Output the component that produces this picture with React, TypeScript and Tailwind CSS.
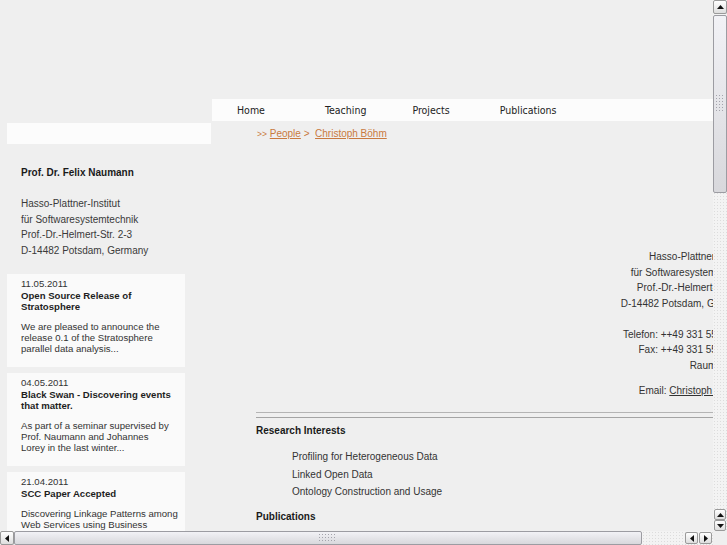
import React from 'react';

type NewsItem = {
  date: string;
  title: string[];
  body: string[];
};

const news: NewsItem[] = [
  {
    date: '11.05.2011',
    title: ['Open Source Release of', 'Stratosphere'],
    body: ['We are pleased to announce the', 'release 0.1 of the Stratosphere', 'parallel data analysis...'],
  },
  {
    date: '04.05.2011',
    title: ['Black Swan - Discovering events', 'that matter.'],
    body: ['As part of a seminar supervised by', 'Prof. Naumann and Johannes', 'Lorey in the last winter...'],
  },
  {
    date: '21.04.2011',
    title: ['SCC Paper Accepted'],
    body: ['Discovering Linkage Patterns among', 'Web Services using Business', 'Process Knowledge...'],
  },
];

const navItems = ['Home', 'Teaching', 'Projects', 'Publications'];

const interests = ['Profiling for Heterogeneous Data', 'Linked Open Data', 'Ontology Construction and Usage'];

// small dotted grip drawn on scrollbar thumbs
function Grip({ cols, rows }: { cols: number; rows: number }) {
  const dots = [];
  for (let r = 0; r < rows; r++) {
    for (let c = 0; c < cols; c++) {
      dots.push(<rect key={`${r}-${c}`} x={c * 3} y={r * 3} width="1" height="1" fill="#a4a4ac" />);
    }
  }
  return (
    <svg width={cols * 3} height={rows * 3} viewBox={`0 0 ${cols * 3} ${rows * 3}`}>
      {dots}
    </svg>
  );
}

function Arrow({ dir }: { dir: 'up' | 'down' | 'left' | 'right' }) {
  const points = {
    up: '0,4 3.5,0 7,4',
    down: '0,0 3.5,4 7,0',
    left: '4,0 0,3.5 4,7',
    right: '0,0 4,3.5 0,7',
  }[dir];
  const vertical = dir === 'up' || dir === 'down';
  return (
    <svg width={vertical ? 7 : 4} height={vertical ? 4 : 7} viewBox={vertical ? '0 0 7 4' : '0 0 4 7'}>
      <polygon points={points} fill="#111" />
    </svg>
  );
}

function VScrollbar() {
  return (
    <div className="w-[14px] h-[531px] flex flex-col bg-[#f3f3f3] bg-[radial-gradient(circle,#dcdcdc_0.6px,transparent_0.8px)] bg-[length:3px_3px]">
      <div className="h-[14px] border border-[#9a9a9a] rounded-[2px] bg-gradient-to-b from-white to-[#dedede] flex items-center justify-center">
        <Arrow dir="up" />
      </div>
      <div className="mt-px h-[178px] border border-[#9c9ca2] rounded-[2px] bg-gradient-to-b from-[#f2f2f6] to-[#d8d8dc] flex items-center justify-center">
        <Grip cols={3} rows={6} />
      </div>
      <div className="flex-1" />
      <div className="h-[11px] mx-px border border-[#9a9a9a] rounded-[2px] bg-gradient-to-b from-white to-[#dedede] flex items-center justify-center">
        <Arrow dir="up" />
      </div>
      <div className="h-[11px] mx-px border border-[#9a9a9a] rounded-[2px] bg-gradient-to-b from-white to-[#dedede] flex items-center justify-center">
        <Arrow dir="down" />
      </div>
    </div>
  );
}

function HScrollbar() {
  return (
    <div className="w-[713px] h-[14px] flex items-center bg-[#f3f3f3] bg-[radial-gradient(circle,#dcdcdc_0.6px,transparent_0.8px)] bg-[length:3px_3px]">
      <div className="w-[14px] h-[14px] border border-[#9a9a9a] rounded-[2px] bg-gradient-to-b from-white to-[#dedede] flex items-center justify-center">
        <Arrow dir="left" />
      </div>
      <div className="w-[628px] h-[14px] border border-[#9c9ca2] rounded-[2px] bg-gradient-to-b from-[#f2f2f6] to-[#d8d8dc] flex items-center justify-center">
        <Grip cols={6} rows={3} />
      </div>
      <div className="flex-1" />
      <div className="w-[13px] h-[12px] border border-[#9a9a9a] rounded-[2px] bg-gradient-to-b from-white to-[#dedede] flex items-center justify-center">
        <Arrow dir="left" />
      </div>
      <div className="w-[13px] h-[12px] ml-px mr-px border border-[#9a9a9a] rounded-[2px] bg-gradient-to-b from-white to-[#dedede] flex items-center justify-center">
        <Arrow dir="right" />
      </div>
    </div>
  );
}

function NewsBox({ item }: { item: NewsItem }) {
  return (
    <div className="ml-[7px] w-[178px] bg-[#fafafa] pl-[14px] pr-[4px] pt-[3.5px] pb-[13.5px] text-[9.6px] leading-[11px] text-[#333]">
      <div className="mb-px">{item.date}</div>
      <div className="font-bold text-[#1e1e1e] mb-[9px]">
        {item.title.map((line, i) => (
          <div key={i}>{line}</div>
        ))}
      </div>
      <div>
        {item.body.map((line, i) => (
          <div key={i}>{line}</div>
        ))}
      </div>
    </div>
  );
}

function Page() {
  return (
    <div className="w-[762px] flex pt-[99px] font-['Liberation_Sans',Arial,sans-serif] text-[10px] text-[#333]">
      {/* Left column */}
      <aside className="w-[212px] shrink-0">
        <div className="mt-[24px] ml-[7px] w-[204px] h-[21px] bg-[#fcfcfc]" />
        <p className="mt-[21px] pl-[21px] font-bold leading-[15.5px] text-[#1a1a1a]">Prof. Dr. Felix Naumann</p>
        <div className="mt-[15.5px] pl-[21px] leading-[15.5px] text-[#3a3a3a]">
          <div>Hasso-Plattner-Institut</div>
          <div>für Softwaresystemtechnik</div>
          <div>Prof.-Dr.-Helmert-Str. 2-3</div>
          <div>D-14482 Potsdam, Germany</div>
        </div>
        <div className="mt-[16px] flex flex-col gap-[6px]">
          {news.map((item) => (
            <NewsBox key={item.date} item={item} />
          ))}
        </div>
      </aside>

      {/* Main column */}
      <main className="w-[550px] shrink-0">
        <nav className="h-[22px] bg-[#fcfcfc] flex items-center pl-[25px] pt-px font-['DejaVu_Sans_Condensed','DejaVu_Sans',sans-serif] [font-stretch:condensed] text-[10.5px] text-[#222]">
          {navItems.map((item) => (
            <a key={item} className="w-[87.4px] shrink-0 first:w-[88px]">
              {item}
            </a>
          ))}
        </nav>

        <div className="pl-[45px] pt-[5px] leading-[15.5px] text-[#c97a40]">
          <span className="text-[8.5px]">&gt;&gt;</span> <a className="underline">People</a> &gt;&nbsp;{' '}
          <a className="underline">Christoph Böhm</a>
        </div>

        <div className="pl-[44px] pr-[14px]">
          <div className="mt-[106.5px] text-right leading-[15.5px] text-[#333]">
            <div>Hasso-Plattner-Institut</div>
            <div>für Softwaresystemtechnik</div>
            <div>Prof.-Dr.-Helmert-Str. 2-3</div>
            <div>D-14482 Potsdam, Germany</div>
            <div className="mt-[15.5px]">Telefon: ++49 331 5509-283</div>
            <div>Fax: ++49 331 5509-325</div>
            <div>Raum A-1.13</div>
            <div className="mt-[10px] pr-[7px]">
              Email: <a className="underline">Christoph Böhm</a>
            </div>
          </div>

          <div className="mt-[13px] h-px bg-[#b4b4b4]" />
          <div className="mt-[4px] h-px bg-[#a4a4a4]" />

          <h2 className="mt-[5.5px] font-bold leading-[15.5px] text-[#1a1a1a]">Research Interests</h2>
          <ul className="mt-[9.5px] ml-[36px] leading-[17.5px] text-[#333]">
            {interests.map((item) => (
              <li key={item}>{item}</li>
            ))}
          </ul>

          <h2 className="mt-[8.5px] font-bold leading-[15.5px] text-[#1a1a1a]">Publications</h2>
        </div>
      </main>
    </div>
  );
}

export default function App() {
  return (
    <div className="w-[727px] h-[545px] flex flex-col bg-[#efefef] overflow-hidden">
      <div className="flex h-[531px]">
        <div className="w-[713px] h-[531px] overflow-hidden">
          <Page />
        </div>
        <VScrollbar />
      </div>
      <div className="flex h-[14px]">
        <HScrollbar />
        <div className="w-[14px] bg-[#efefef]" />
      </div>
    </div>
  );
}
